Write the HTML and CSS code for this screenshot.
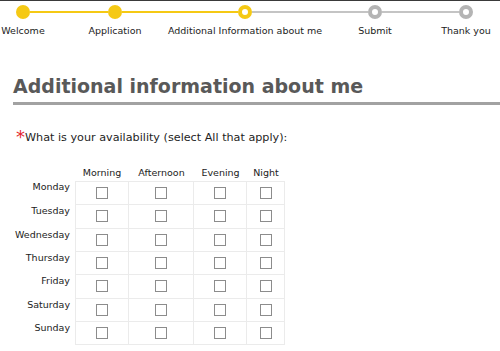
FILE: index.html
```html
<!DOCTYPE html>
<html>
<head>
<meta charset="utf-8">
<link rel="stylesheet" href="styles.css">
</head>
<body>
<nav class="steps">
  <div class="step">
    <div class="track"><span class="line none"></span><span class="dot done"></span><span class="line y"></span></div>
    <div class="label">Welcome</div>
  </div>
  <div class="step">
    <div class="track"><span class="line y"></span><span class="dot done"></span><span class="line y"></span></div>
    <div class="label">Application</div>
  </div>
  <div class="step">
    <div class="track"><span class="line y"></span><span class="dot current"></span><span class="line g"></span></div>
    <div class="label">Additional Information about me</div>
  </div>
  <div class="step">
    <div class="track"><span class="line g"></span><span class="dot todo"></span><span class="line g"></span></div>
    <div class="label">Submit</div>
  </div>
  <div class="step">
    <div class="track"><span class="line g"></span><span class="dot todo"></span><span class="line none"></span></div>
    <div class="label">Thank you</div>
  </div>
</nav>
<main class="content">
  <h1 class="title">Additional information about me</h1>
  <p class="question"><span class="req">*</span>What is your availability (select All that apply):</p>
  <table class="avail">
    <thead>
      <tr>
        <th class="c-day"></th>
        <th class="c-m">Morning</th>
        <th class="c-a">Afternoon</th>
        <th class="c-e">Evening</th>
        <th class="c-n">Night</th>
      </tr>
    </thead>
    <tbody>
      <tr><th>Monday</th><td><input type="checkbox"></td><td><input type="checkbox"></td><td><input type="checkbox"></td><td><input type="checkbox"></td></tr>
      <tr><th>Tuesday</th><td><input type="checkbox"></td><td><input type="checkbox"></td><td><input type="checkbox"></td><td><input type="checkbox"></td></tr>
      <tr><th>Wednesday</th><td><input type="checkbox"></td><td><input type="checkbox"></td><td><input type="checkbox"></td><td><input type="checkbox"></td></tr>
      <tr><th>Thursday</th><td><input type="checkbox"></td><td><input type="checkbox"></td><td><input type="checkbox"></td><td><input type="checkbox"></td></tr>
      <tr><th>Friday</th><td><input type="checkbox"></td><td><input type="checkbox"></td><td><input type="checkbox"></td><td><input type="checkbox"></td></tr>
      <tr><th>Saturday</th><td><input type="checkbox"></td><td><input type="checkbox"></td><td><input type="checkbox"></td><td><input type="checkbox"></td></tr>
      <tr><th>Sunday</th><td><input type="checkbox"></td><td><input type="checkbox"></td><td><input type="checkbox"></td><td><input type="checkbox"></td></tr>
    </tbody>
  </table>
</main>
</body>
</html>
```
FILE: styles.css
```css
html, body {
  margin: 0;
  padding: 0;
  background: #fff;
}
body {
  font-family: "DejaVu Sans", Verdana, sans-serif;
  color: #333;
  border-top: 1px solid #3a3a3a;
}

/* progress steps */
.steps {
  display: grid;
  grid-template-columns: 46px 138px 122px 138px 44px;
}
.step {
  display: flex;
  flex-direction: column;
  align-items: center;
}
.track {
  display: flex;
  align-items: center;
  width: 100%;
  height: 14px;
  margin-top: 4px;
}
.line {
  flex: 1;
  height: 2px;
}
.line.y { background: #f5c914; }
.line.g { background: #c4c4c4; }
.line.none { background: transparent; }
.dot {
  box-sizing: border-box;
  width: 14px;
  height: 14px;
  border-radius: 50%;
  flex: none;
}
.dot.done { background: #f5c914; }
.dot.current { background: #fff; border: 4px solid #f5c914; }
.dot.todo { background: #fff; border: 4px solid #b4b4b4; }
.label {
  margin-top: 6px;
  font-size: 9.5px;
  line-height: 12px;
  white-space: nowrap;
  color: #222;
}

/* content */
.content {
  padding-left: 13px;
}
.title {
  margin: 38px 0 0 0;
  font-size: 19px;
  line-height: 23px;
  font-weight: bold;
  color: #595959;
  padding-bottom: 4px;
  border-bottom: 3px solid #a2a2a2;
}
.question {
  margin: 26px 0 0 0;
  padding-left: 3px;
  font-size: 11.2px;
  line-height: 14px;
  color: #1e1e1e;
}
.req {
  color: #e4262f;
  font-size: 18px;
  line-height: 0;
  vertical-align: -2px;
}

/* availability table */
.avail {
  margin-top: 22px;
  border-collapse: separate;
  border-spacing: 0;
  font-size: 9.5px;
  color: #222;
}
.avail thead th {
  height: 12px;
  padding: 0 0 2px 0;
  line-height: 12px;
  font-weight: normal;
  text-align: center;
  vertical-align: bottom;
  white-space: nowrap;
}
.avail .c-day { width: 57px; padding-right: 5px; }
.avail .c-m { width: 54px; }
.avail .c-a { width: 65px; }
.avail .c-e { width: 53px; }
.avail .c-n { width: 38px; }
.avail tbody th {
  padding: 0 5px 0 0;
  line-height: 12px;
  font-weight: normal;
  text-align: right;
  vertical-align: top;
  white-space: nowrap;
}
.avail td {
  height: 22.33px;
  padding: 0;
  vertical-align: middle;
  border-right: 1px solid #ebebeb;
  border-bottom: 1px solid #ebebeb;
}
.avail tbody tr:first-child td {
  border-top: 1px solid #ebebeb;
}
.avail tbody td:nth-child(2) {
  border-left: 1px solid #ebebeb;
}
.avail input {
  appearance: none;
  -webkit-appearance: none;
  display: block;
  box-sizing: border-box;
  width: 12px;
  height: 12px;
  margin: 0 auto;
  border: 1px solid #8c8c8c;
  background: #fff;
  border-radius: 0;
}
```
